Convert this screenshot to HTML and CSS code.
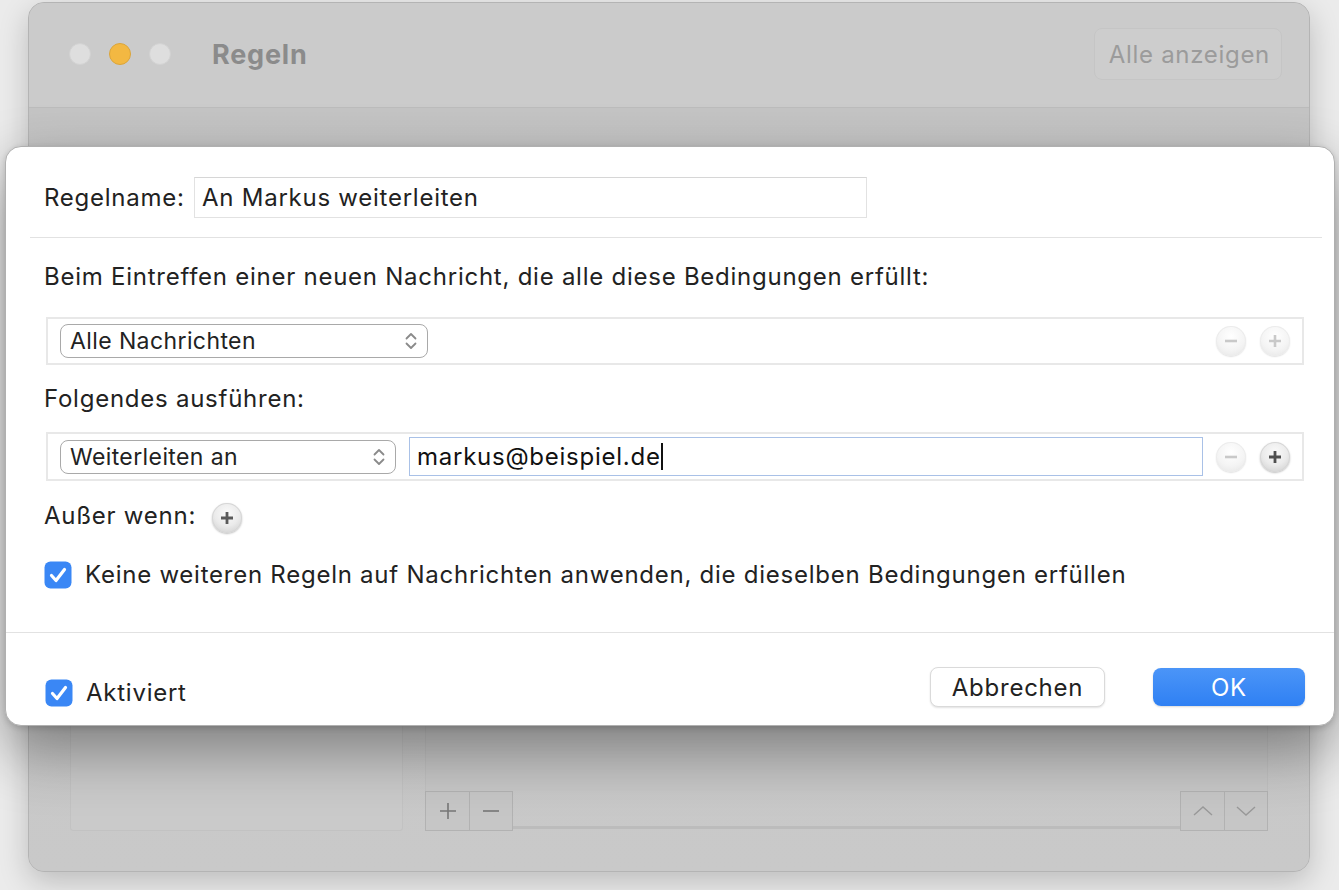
FILE: index.html
```html
<!DOCTYPE html>
<html lang="de">
<head>
<meta charset="utf-8">
<title>Regeln</title>
<link rel="stylesheet" href="styles.css">
</head>
<body>
<div class="window">
  <div class="titlebar">
    <div class="lights">
      <span class="light"></span>
      <span class="light yellow"></span>
      <span class="light"></span>
    </div>
    <div class="wtitle">Regeln</div>
    <div class="spacer"></div>
    <div class="showall">Alle anzeigen</div>
  </div>
  <div class="wcontent">
    <div class="list"></div>
    <div class="detail">
      <div class="detail-area"></div>
      <div class="bar">
        <div class="sqbtn"><svg width="20" height="20" viewBox="0 0 20 20"><path d="M10 2v16M2 10h16" stroke="#777" stroke-width="1.6"/></svg></div>
        <div class="sqbtn"><svg width="20" height="20" viewBox="0 0 20 20"><path d="M2 10h16" stroke="#777" stroke-width="1.6"/></svg></div>
        <div class="barfill"></div>
        <div class="sqbtn"><svg width="22" height="14" viewBox="0 0 22 14"><path d="M2 11l9-8 9 8" fill="none" stroke="#999" stroke-width="1.4"/></svg></div>
        <div class="sqbtn"><svg width="22" height="14" viewBox="0 0 22 14"><path d="M2 3l9 8 9-8" fill="none" stroke="#999" stroke-width="1.4"/></svg></div>
      </div>
    </div>
  </div>
</div>

<div class="sheet">
  <div class="namerow">
    <span class="label">Regelname:</span>
    <div class="namefield">An Markus weiterleiten</div>
  </div>
  <div class="sep inset"></div>
  <div class="main">
    <div class="line">Beim Eintreffen einer neuen Nachricht, die alle diese Bedingungen erfüllt:</div>
    <div class="rulebox cond">
      <div class="popup w368"><span>Alle Nachrichten</span>
        <svg width="16" height="24" viewBox="0 0 16 24"><path d="M3.5 9.5L8 5l4.5 4.5M3.5 14.5L8 19l4.5-4.5" fill="none" stroke="#8a8a8a" stroke-width="1.8" stroke-linecap="round" stroke-linejoin="round"/></svg>
      </div>
      <div class="fill"></div>
      <div class="rbtns">
        <span class="rbtn"><svg width="16" height="16" viewBox="0 0 16 16"><path d="M2 8h12" stroke="#c9c9c9" stroke-width="2.6"/></svg></span>
        <span class="rbtn"><svg width="16" height="16" viewBox="0 0 16 16"><path d="M8 2v12M2 8h12" stroke="#c9c9c9" stroke-width="2.6"/></svg></span>
      </div>
    </div>
    <div class="line second">Folgendes ausführen:</div>
    <div class="rulebox act">
      <div class="popup w336"><span>Weiterleiten an</span>
        <svg width="16" height="24" viewBox="0 0 16 24"><path d="M3.5 9.5L8 5l4.5 4.5M3.5 14.5L8 19l4.5-4.5" fill="none" stroke="#8a8a8a" stroke-width="1.8" stroke-linecap="round" stroke-linejoin="round"/></svg>
      </div>
      <div class="emailfield"><span>markus@beispiel.de</span><span class="caret"></span></div>
      <div class="rbtns">
        <span class="rbtn"><svg width="16" height="16" viewBox="0 0 16 16"><path d="M2 8h12" stroke="#c9c9c9" stroke-width="2.6"/></svg></span>
        <span class="rbtn active"><svg width="16" height="16" viewBox="0 0 16 16"><path d="M8 2v12M2 8h12" stroke="#505050" stroke-width="2.8"/></svg></span>
      </div>
    </div>
    <div class="except">
      <span>Außer wenn:</span>
      <span class="rbtn active"><svg width="16" height="16" viewBox="0 0 16 16"><path d="M8 2v12M2 8h12" stroke="#5a5a5a" stroke-width="2.8"/></svg></span>
    </div>
    <div class="checkrow">
      <svg class="check" width="28" height="28" viewBox="0 0 28 28"><rect x="0.5" y="0.5" width="27" height="27" rx="6" fill="#3a87f5"/><path d="M7.5 14.5l4.5 5 8.5-11" fill="none" stroke="#fff" stroke-width="3.2" stroke-linecap="round" stroke-linejoin="round"/></svg>
      <span>Keine weiteren Regeln auf Nachrichten anwenden, die dieselben Bedingungen erfüllen</span>
    </div>
  </div>
  <div class="sep"></div>
  <div class="footer">
    <div class="checkrow foot">
      <svg class="check" width="28" height="28" viewBox="0 0 28 28"><rect x="0.5" y="0.5" width="27" height="27" rx="6" fill="#3a87f5"/><path d="M7.5 14.5l4.5 5 8.5-11" fill="none" stroke="#fff" stroke-width="3.2" stroke-linecap="round" stroke-linejoin="round"/></svg>
      <span>Aktiviert</span>
    </div>
    <div class="spacer"></div>
    <div class="btn cancel">Abbrechen</div>
    <div class="btn ok">OK</div>
  </div>
</div>
</body>
</html>
```

FILE: styles.css
```css
* { box-sizing: border-box; }
html, body { margin: 0; padding: 0; }
body {
  width: 1339px;
  height: 890px;
  overflow: hidden;
  background: #ebebeb;
  font-family: Inter, "Noto Sans", "Liberation Sans", sans-serif;
  color: #222;
  position: relative;
}

.window {
  margin: 2px 0 0 28px;
  width: 1282px;
  height: 870px;
  border-radius: 16px;
  background: #c8c8c8;
  border: 1px solid #b4b4b4;
  box-shadow: 0 10px 30px rgba(0,0,0,0.2);
  display: flex;
  flex-direction: column;
  overflow: hidden;
}

.titlebar {
  height: 105px;
  flex: none;
  display: flex;
  align-items: center;
  padding: 0 27px 0 40px;
  background: #cbcbcb;
  border-bottom: 1px solid #bcbcbc;
  padding-bottom: 2px;
}
.lights { display: flex; gap: 18px; }
.light {
  width: 22px; height: 22px; border-radius: 50%;
  background: #dedede;
  border: 1px solid #d2d2d2;
}
.light.yellow { background: #f3b842; border-color: #dba53a; }
.wtitle {
  margin-left: 41px;
  font-size: 27px;
  font-weight: 700;
  color: #8b8b8b;
  letter-spacing: 0.8px;
}
.spacer { flex: 1; }
.showall {
  height: 52px;
  padding: 0 11px 0 14px;
  display: flex; align-items: center;
  border-radius: 8px;
  background: #cdcdcd;
  border: 1px solid #c5c5c5;
  color: #9b9b9b;
  font-size: 24px;
  letter-spacing: 0.7px;
}

.wcontent {
  flex: 1;
  display: flex;
  padding: 50px 41px 40px 41px;
  gap: 22px;
  background: linear-gradient(#c4c4c4, #c9c9c9);
}
.list {
  width: 333px;
  border-radius: 3px;
  background: #cacaca;
  border: 1px solid #c2c2c2;
}
.detail {
  flex: 1;
  display: flex;
  flex-direction: column;
}
.detail-area {
  flex: 1;
  background: #c7c7c7;
  border: 1px solid #c1c1c1;
  border-bottom: none;
}
.bar {
  height: 40px;
  display: flex;
  align-items: stretch;
}
.sqbtn {
  width: 44px;
  display: flex; align-items: center; justify-content: center;
  border: 1px solid #b2b2b2;
  border-right: none;
  background: #c6c6c6;
}
.sqbtn:nth-child(2) { border-right: 1px solid #b2b2b2; }
.sqbtn:last-child { border-right: 1px solid #b2b2b2; }
.barfill {
  flex: 1;
  border-bottom: 3px solid #bcbcbc;
  margin-bottom: 2px;
}

/* Sheet */
.sheet {
  position: absolute;
  left: 5px;
  top: 146px;
  width: 1330px;
  height: 580px;
  background: #fff;
  border-radius: 16px;
  border: 1px solid #b0b0b0;
  box-shadow: 0 24px 60px rgba(0,0,0,0.38), 0 2px 6px rgba(0,0,0,0.15);
  display: flex;
  flex-direction: column;
  font-size: 24px;
  letter-spacing: 0.75px;
}
.namerow {
  display: flex;
  align-items: center;
  padding: 30px 0 0 38px;
  height: 71px;
}
.label { width: 150px; }
.namefield {
  width: 673px;
  height: 41px;
  border: 1px solid #e2e2e2;
  border-top-color: #d6d6d6;
  display: flex; align-items: center;
  padding-left: 7px;
  color: #222;
}
.sep { height: 1px; background: #e2e2e2; flex: none; }
.sep.inset { margin: 19px 12px 0 24px; }

.main {
  padding: 0 30px 0 38px;
  height: 394px;
}
.line { line-height: 28px; margin-top: 25px; }
.line.second { margin-top: 20px; }
.rulebox {
  margin-left: 2px;
  border: 2px solid #e8e8e8;
  display: flex;
  align-items: center;
  padding: 0 12px 0 12px;
}
.rulebox.cond { height: 48px; margin-top: 26px; }
.rulebox.act { height: 49px; margin-top: 19px; }
.popup {
  height: 34px;
  border: 1.5px solid #a9a9a9;
  border-radius: 8px;
  display: flex; align-items: center;
  justify-content: space-between;
  padding: 0 8px 0 9px;
  background: #fff;
  font-size: 23px;
  letter-spacing: 0.4px;
}
.w368 { width: 368px; }
.w336 { width: 336px; }
.fill { flex: 1; }
.emailfield {
  margin-left: 13px;
  width: 794px;
  height: 39px;
  border: 1px solid #a9c1e7;
  display: flex; align-items: center;
  padding-left: 7px;
  color: #111;
}
.caret { width: 2px; height: 27px; background: #111; margin-left: 0; }
.rbtns { margin-left: auto; display: flex; gap: 14px; }
.rbtn {
  width: 30px; height: 30px; border-radius: 50%;
  display: inline-flex; align-items: center; justify-content: center;
  background: radial-gradient(circle at 50% 35%, #ffffff 0%, #f4f4f4 55%, #e3e3e3 100%);
  box-shadow: 0 1px 1.5px rgba(0,0,0,0.12), inset 0 0 0 1px #ececec;
}
.rbtn.active {
  background: radial-gradient(circle at 50% 35%, #fafafa 0%, #ebebeb 50%, #c9c9c9 100%);
  box-shadow: 0 1px 2px rgba(0,0,0,0.25), inset 0 0 0 1px #d6d6d6;
}
.except {
  margin-top: 18px;
  display: flex;
  align-items: center;
  line-height: 28px;
  gap: 16px;
}
.except .rbtn { margin-top: 4px; }
.checkrow {
  margin-top: 28px;
  display: flex;
  align-items: center;
  gap: 13px;
  line-height: 28px;
}
.check { flex: none; }

.footer {
  flex: 1;
  display: flex;
  align-items: center;
  padding: 10px 29px 0 39px;
}
.checkrow.foot { margin-top: 17px; }
.btn {
  height: 40px;
  display: flex; align-items: center; justify-content: center;
  border-radius: 8px;
  margin-top: 6px;
}
.cancel {
  width: 175px;
  border: 1px solid #dadada;
  box-shadow: 0 1px 2px rgba(0,0,0,0.12);
  color: #222;
  background: #fff;
}
.ok {
  margin-left: 48px;
  width: 152px;
  height: 38px;
  color: #fff;
  background: linear-gradient(#4b95f8, #2f80f3);
  box-shadow: 0 1px 2px rgba(0,0,0,0.15);
}
```
